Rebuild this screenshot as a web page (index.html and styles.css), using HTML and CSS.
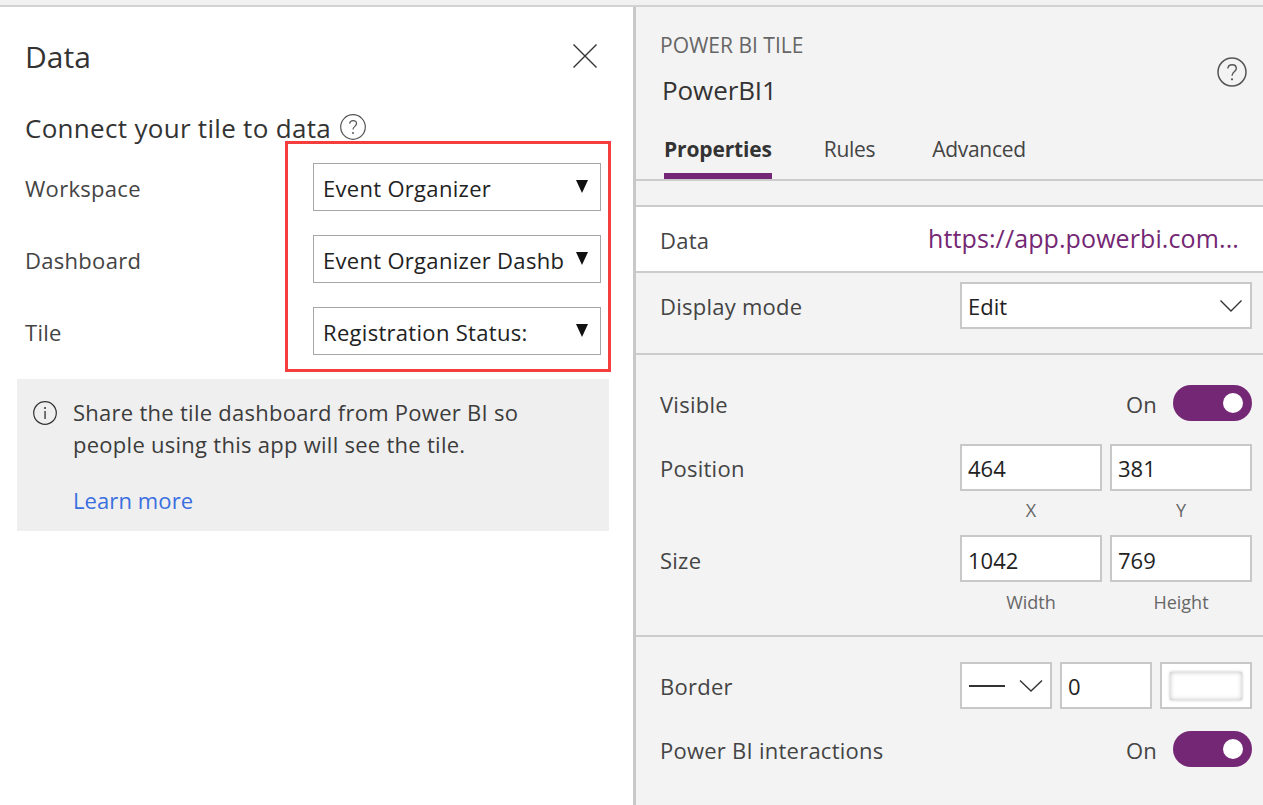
FILE: index.html
```html
<!DOCTYPE html>
<html lang="en">
<head>
<meta charset="utf-8">
<title>Power BI tile</title>
<link rel="stylesheet" href="styles.css">
</head>
<body>
<div class="topstrip"></div>
<div class="main">
  <section class="left">
    <header class="left-head">
      <h1 class="left-title">Data</h1>
      <svg class="close" width="26" height="26" viewBox="0 0 26 26"><path d="M1.500 1.500 24.500 24.500M24.500 1.500 1.500 24.500" fill="none" stroke="#333" stroke-width="1.400"/></svg>
    </header>
    <div class="connect">
      <span>Connect your tile to data</span>
      <svg class="help-small" width="26" height="28" viewBox="0 0 26 28"><circle cx="13" cy="14" r="12.300" fill="none" stroke="#555" stroke-width="1.200"/><path d="M9.600 10.600c.3-2 1.700-3 3.500-3 2 0 3.400 1.200 3.400 3 0 2.800-3.500 2.800-3.500 5.900" fill="none" stroke="#555" stroke-width="1.200"/><circle cx="13" cy="20" r="1" fill="#555"/></svg>
    </div>
    <div class="form">
      <div class="form-row">
        <span class="form-label">Workspace</span>
        <div class="native-select"><span class="native-text">Event Organizer</span><span class="native-arrow"></span></div>
      </div>
      <div class="form-row">
        <span class="form-label">Dashboard</span>
        <div class="native-select"><span class="native-text">Event Organizer Dashb</span><span class="native-arrow"></span></div>
      </div>
      <div class="form-row">
        <span class="form-label">Tile</span>
        <div class="native-select"><span class="native-text">Registration Status:</span><span class="native-arrow"></span></div>
      </div>
      <div class="highlight"></div>
    </div>
    <div class="notice">
      <svg class="info" width="26" height="26" viewBox="0 0 26 26"><circle cx="13" cy="13" r="11.300" fill="none" stroke="#333" stroke-width="1.200"/><rect x="12.400" y="11" width="1.300" height="8" fill="#333"/><circle cx="13" cy="8" r="1" fill="#333"/></svg>
      <div class="notice-body">
        <p class="notice-text">Share the tile dashboard from Power BI so<br>people using this app will see the tile.</p>
        <a class="learn" href="#">Learn more</a>
      </div>
    </div>
  </section>
  <section class="right">
    <header class="right-head">
      <div>
        <div class="kind">POWER BI TILE</div>
        <div class="ctrl-name">PowerBI1</div>
      </div>
      <svg class="help-big" width="32" height="32" viewBox="0 0 32 32"><circle cx="16" cy="16" r="14" fill="none" stroke="#555" stroke-width="1.500"/><path d="M11.800 12.500c.3-2.500 2-3.800 4.300-3.800 2.500 0 4.200 1.500 4.200 3.700 0 3.400-4.300 3.400-4.300 7.300" fill="none" stroke="#555" stroke-width="1.400"/><circle cx="16" cy="23.300" r="1.100" fill="#555"/></svg>
    </header>
    <nav class="tabs">
      <span class="tab tab-active">Properties</span>
      <span class="tab">Rules</span>
      <span class="tab">Advanced</span>
    </nav>
    <div class="tab-gap"></div>
    <div class="data-row">
      <span class="prop">Data</span>
      <span class="url">https://app.powerbi.com...</span>
    </div>
    <div class="section display-section">
      <div class="prop-row">
        <span class="prop">Display mode</span>
        <div class="field field-wide"><span>Edit</span>
          <svg class="chev" width="24" height="14" viewBox="0 0 24 14"><path d="M1.500 1.500 12 12 22.500 1.500" fill="none" stroke="#333" stroke-width="1.400"/></svg>
        </div>
      </div>
    </div>
    <div class="section layout-section">
      <div class="prop-row toggle-row">
        <span class="prop">Visible</span>
        <div class="switch-wrap"><span class="on">On</span><span class="switch"><span class="knob"></span></span></div>
      </div>
      <div class="prop-row pos-row">
        <span class="prop">Position</span>
        <div class="pair">
          <div class="pair-item"><div class="field"><span>464</span></div><span class="cap">X</span></div>
          <div class="pair-item"><div class="field"><span>381</span></div><span class="cap">Y</span></div>
        </div>
      </div>
      <div class="prop-row size-row">
        <span class="prop">Size</span>
        <div class="pair">
          <div class="pair-item"><div class="field"><span>1042</span></div><span class="cap">Width</span></div>
          <div class="pair-item"><div class="field"><span>769</span></div><span class="cap">Height</span></div>
        </div>
      </div>
    </div>
    <div class="section-last">
      <div class="prop-row border-row">
        <span class="prop">Border</span>
        <div class="triple">
          <div class="field field-small">
            <span class="line-sample"></span>
            <svg width="24" height="14" viewBox="0 0 24 14"><path d="M1 1.500 12 12 23 1.500" fill="none" stroke="#333" stroke-width="1.400"/></svg>
          </div>
          <div class="field field-small"><span>0</span></div>
          <div class="field field-small field-color"><span class="swatch"></span></div>
        </div>
      </div>
      <div class="prop-row interact-row">
        <span class="prop">Power BI interactions</span>
        <div class="switch-wrap"><span class="on">On</span><span class="switch"><span class="knob"></span></span></div>
      </div>
    </div>
  </section>
</div>
</body>
</html>
```
FILE: styles.css
```css
* { box-sizing: border-box; }
html, body { margin: 0; padding: 0; height: 805px; overflow: hidden; }
body { font-family: "Open Sans", "Noto Sans", "Liberation Sans", sans-serif; color: #333; background: #fff; }
.topstrip { height: 7px; background: #f1f1f1; border-bottom: 2px solid #d2d2d2; }
.main { display: flex; height: 798px; }

.left { width: 636px; flex: none; background: #fff; border-right: 3px solid #c8c8c8; }
.left-head { height: 101px; padding: 28px 35px 0 25px; display: flex; justify-content: space-between; align-items: flex-start; }
.left-title { margin: 0; font-size: 30px; font-weight: 400; line-height: 44px; color: #333; }
.close { margin-top: 8px; }
.connect { display: flex; align-items: center; gap: 9px; height: 40px; padding-left: 25px; font-size: 26px; letter-spacing: .3px; color: #333; }
.help-small { flex: none; margin-top: -2px; }
.form { position: relative; padding: 15px 32px 0 25px; }
.form-row { display: flex; justify-content: space-between; align-items: center; height: 48px; margin-bottom: 24px; }
.form-row:last-of-type { margin-bottom: 0; }
.form-label { font-size: 22px; letter-spacing: .3px; color: #444; padding-top: 2px; }
.native-select { width: 288px; height: 48px; border: 1px solid #a6a6a6; background: #fff; display: flex; align-items: center; padding: 0 12px 0 9px; }
.native-text { width: 241px; overflow: hidden; white-space: nowrap; font-size: 22px; letter-spacing: .3px; color: #222; padding-top: 2px; }
.native-arrow { margin-left: auto; margin-bottom: 2px; width: 0; height: 0; border-left: 6px solid transparent; border-right: 6px solid transparent; border-top: 13px solid #111; }
.highlight { position: absolute; left: 285px; top: -7px; width: 326px; height: 231px; border: 3px solid #f43e3e; pointer-events: none; }
.notice { display: flex; margin: 8px 24px 0 17px; height: 152px; background: #efefef; padding: 21px 0 0 15px; gap: 15px; }
.info { flex: none; }
.notice-body { margin-top: -4px; }
.notice-text { margin: 0; font-size: 22px; line-height: 32px; letter-spacing: .27px; color: #3c3c3c; }
.learn { display: block; margin-top: 24px; font-size: 22px; line-height: 32px; letter-spacing: .1px; color: #3a6ee0; text-decoration: none; }

.right { flex: 1; background: #f3f3f3; min-width: 0; }
.right-head { height: 122px; padding: 22px 15px 0 24px; display: flex; justify-content: space-between; }
.kind { font-size: 21px; line-height: 32px; color: #666; }
.ctrl-name { font-size: 26px; line-height: 40px; margin: 9px 0 0 2px; letter-spacing: -.1px; color: #333; }
.help-big { margin-top: 27px; }
.tabs { height: 52px; display: flex; gap: 52px; padding-left: 28px; border-bottom: 2px solid #ccc; }
.tab { height: 50px; line-height: 40px; font-size: 21px; letter-spacing: -.3px; color: #444; margin-right: 5px; }
.tab-active { font-weight: 700; color: #333; border-bottom: 6px solid #742774; letter-spacing: -.15px; margin-right: 0; }
.tab-gap { height: 24px; }
.data-row { height: 68px; background: #fff; border-top: 2px solid #ccc; border-bottom: 2px solid #ccc; display: flex; justify-content: space-between; align-items: center; padding: 0 24px 0 24px; }
.prop { font-size: 22px; letter-spacing: .25px; color: #444; }
.data-row .prop { padding-top: 2px; }
.url { font-size: 25px; letter-spacing: .1px; color: #742774; margin-top: -2px; }
.section { border-bottom: 2px solid #ccc; padding: 0 11px 0 24px; }
.display-section { height: 82px; padding-top: 9px; }
.layout-section { height: 282px; padding-top: 30px; }
.section-last { padding: 25px 11px 0 24px; }
.prop-row { display: flex; justify-content: space-between; align-items: flex-start; }
.prop-row > .prop { line-height: 48px; }
.display-section .prop-row { align-items: center; height: 47px; }
.field { width: 142px; height: 47px; background: #fff; border: 2px solid #c8c8c8; display: flex; align-items: center; justify-content: space-between; padding: 0 7px 0 6px; font-size: 22px; color: #222; }
.field-wide { width: 292px; }
.toggle-row { align-items: center; height: 36px; }
.toggle-row .prop { padding-top: 2px; }
.switch-wrap { display: flex; align-items: center; gap: 16px; }
.on { font-size: 22px; color: #444; padding-top: 2px; margin-left: -1px; letter-spacing: .2px; }
.switch { width: 79px; height: 36px; border-radius: 18px; background: #742774; display: flex; align-items: center; justify-content: flex-end; padding-right: 9px; }
.knob { width: 20px; height: 20px; border-radius: 50%; background: #fff; }
.pos-row { margin-top: 23px; }
.size-row { margin-top: 11px; }
.size-row > .prop { padding-top: 1px; }
.size-row .field { padding-top: 2px; }
.size-row .cap { line-height: 40px; }
.pair { display: flex; gap: 8px; }
.pair-item { width: 142px; display: flex; flex-direction: column; align-items: center; }
.cap { font-size: 18px; line-height: 38px; height: 33px; color: #666; }
.triple { display: flex; gap: 8px; }
.field-small { width: 92px; }
.line-sample { width: 36px; height: 2px; background: #333; margin-left: 1px; }
.field-color { padding: 8px 8px; justify-content: center; }
.swatch { width: 72px; height: 28px; background: #fff; box-shadow: inset 0 0 5px rgba(0,0,0,.25), 0 0 3px rgba(0,0,0,.25); }
.interact-row { margin-top: 21px; align-items: center; height: 36px; }
.interact-row .prop { padding-top: 2px; }
```
